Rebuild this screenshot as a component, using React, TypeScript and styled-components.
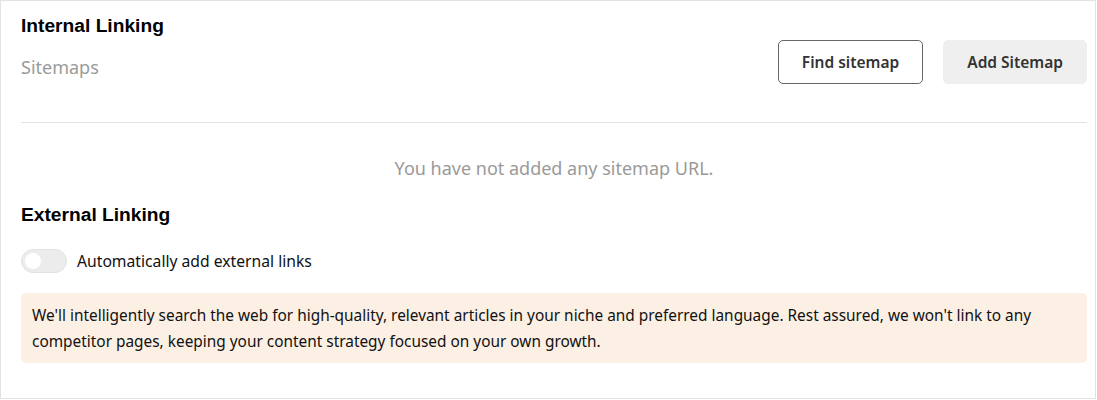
import React from "react";
import styled, { createGlobalStyle } from "styled-components";

const Global = createGlobalStyle`
  html, body { margin: 0; padding: 0; background: #fff; }
  body { font-family: "Segoe UI", "Noto Sans", "Open Sans", sans-serif; }
`;

const Card = styled.div`
  box-sizing: border-box;
  width: 1096px;
  height: 399px;
  border: 1px solid #e3e3e3;
  padding: 13px 8px 0 20px;
  background: #fff;
`;

const HeaderRow = styled.div`
  display: flex;
  justify-content: space-between;
  align-items: flex-start;
  padding-bottom: 38px;
  border-bottom: 1px solid #e2e2e2;
`;

const TitleBlock = styled.div`
  display: flex;
  flex-direction: column;
`;

const Title = styled.h2`
  margin: 0;
  font-family: "Liberation Sans", Arial, sans-serif;
  font-weight: 700;
  font-size: 19.2px;
  line-height: 24px;
  color: #000;
`;

const Subtitle = styled.div`
  margin-top: 17px;
  font-size: 18px;
  line-height: 24px;
  color: #9a9a9a;
`;

const Actions = styled.div`
  display: flex;
  gap: 20px;
  margin-top: 26px;
`;

const Button = styled.button<{ $variant?: "outline" | "muted" }>`
  box-sizing: border-box;
  height: 44px;
  padding: 0 23px;
  border-radius: 5px;
  font-family: "Segoe UI", "Noto Sans", "Open Sans", sans-serif;
  font-size: 15.5px;
  font-weight: 600;
  color: #333;
  cursor: pointer;
  border: 1px solid ${(p) => (p.$variant === "outline" ? "#666" : "#efefef")};
  background: ${(p) => (p.$variant === "outline" ? "#fff" : "#efefef")};
`;

const Empty = styled.div`
  text-align: center;
  margin-top: 33px;
  font-size: 18px;
  line-height: 24px;
  color: #9a9a9a;
`;

const Section = styled.div`
  margin-top: 23px;
`;

const ToggleRow = styled.label`
  display: flex;
  align-items: center;
  gap: 10px;
  margin-top: 22px;
  font-size: 15.7px;
  color: #111;
`;

const Toggle = styled.span`
  box-sizing: border-box;
  position: relative;
  display: inline-block;
  width: 46px;
  height: 24px;
  border-radius: 12px;
  background: #ececec;
  border: 1px solid #e2e2e2;
`;

const Knob = styled.span`
  position: absolute;
  top: 3px;
  left: 3px;
  width: 16px;
  height: 16px;
  border-radius: 50%;
  background: #fff;
`;

const Info = styled.div`
  margin-top: 20px;
  box-sizing: border-box;
  padding: 10px 11px 8px 11px;
  background: #fcf0e4;
  border-radius: 5px;
  font-size: 15.4px;
  line-height: 26px;
  color: #111;
`;

export default function App() {
  return (
    <>
      <Global />
      <Card>
        <HeaderRow>
          <TitleBlock>
            <Title>Internal Linking</Title>
            <Subtitle>Sitemaps</Subtitle>
          </TitleBlock>
          <Actions>
            <Button $variant="outline">Find sitemap</Button>
            <Button $variant="muted">Add Sitemap</Button>
          </Actions>
        </HeaderRow>
        <Empty>You have not added any sitemap URL.</Empty>
        <Section>
          <Title>External Linking</Title>
          <ToggleRow>
            <Toggle>
              <Knob />
            </Toggle>
            Automatically add external links
          </ToggleRow>
          <Info>
            We'll intelligently search the web for high-quality, relevant articles in your niche and preferred
            language. Rest assured, we won't link to any competitor pages, keeping your content strategy focused on
            your own growth.
          </Info>
        </Section>
      </Card>
    </>
  );
}
